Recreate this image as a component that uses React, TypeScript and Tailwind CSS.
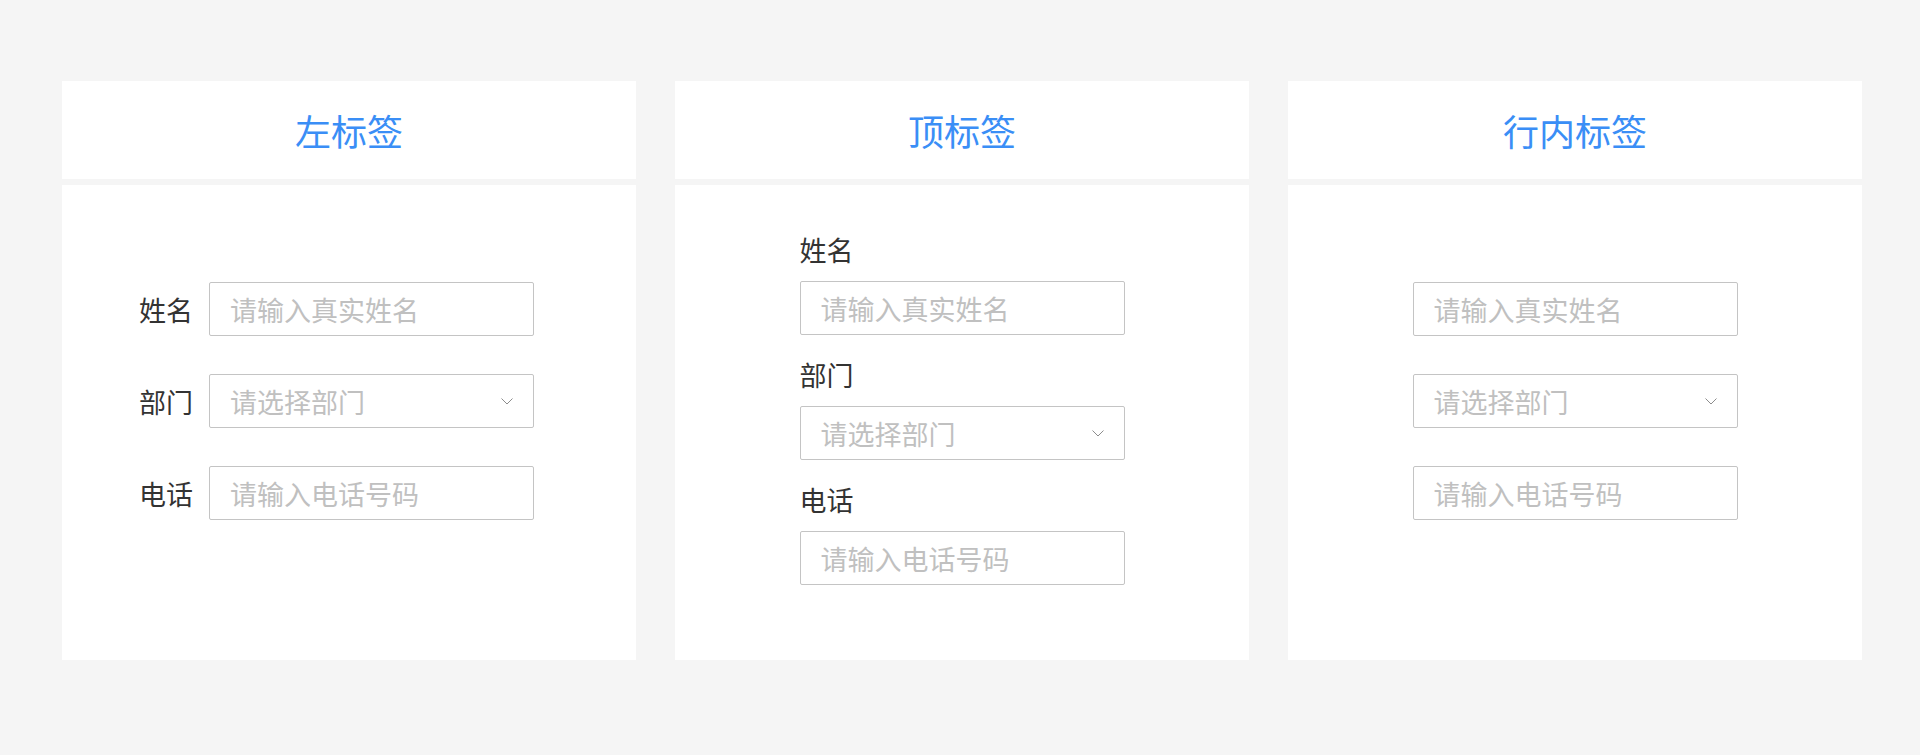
import React from 'react';

const font = { fontFamily: '"Noto Sans CJK SC", "Noto Sans", sans-serif' };

type Field = { label: string; placeholder: string; select?: boolean };

const fields: Field[] = [
  { label: '姓名', placeholder: '请输入真实姓名' },
  { label: '部门', placeholder: '请选择部门', select: true },
  { label: '电话', placeholder: '请输入电话号码' },
];

const Chevron = () => (
  <svg width="12" height="7" viewBox="0 0 12 7" fill="none" className="shrink-0">
    <path d="M0.5 0.5 L6 6 L11.5 0.5" stroke="#8c8c8c" strokeWidth="1" />
  </svg>
);

const Input: React.FC<{ field: Field }> = ({ field }) => (
  <div className="flex items-center justify-between w-[325px] h-[54px] border border-[#c4c4c4] rounded-[2px] bg-white pl-[20px] pr-[20px]">
    <span className="text-[27px] leading-none text-[#c0c0c0]">{field.placeholder}</span>
    {field.select && <Chevron />}
  </div>
);

const Card: React.FC<{ title: string; children: React.ReactNode }> = ({ title, children }) => (
  <div className="flex flex-col w-[574px] gap-[6px]">
    <div className="h-[98px] bg-white flex items-center justify-center">
      <h2 className="text-[36px] leading-none text-[#3a8ef6]">{title}</h2>
    </div>
    <div className="h-[475px] bg-white">{children}</div>
  </div>
);

export default function App() {
  return (
    <div className="min-h-[755px] bg-[#f5f5f5] pt-[81px] pl-[62px]" style={font}>
      <div className="flex gap-[39px]">
        <Card title="左标签">
          <div className="flex flex-col gap-[38px] pt-[97px] pl-[77px]">
            {fields.map((f) => (
              <div key={f.label} className="flex items-center">
                <span className="text-[27px] leading-none text-[#333333] mr-[16px]">{f.label}</span>
                <Input field={f} />
              </div>
            ))}
          </div>
        </Card>
        <Card title="顶标签">
          <div className="flex flex-col items-center gap-[22px] pt-[47px]">
            {fields.map((f) => (
              <div key={f.label} className="flex flex-col gap-[13px]">
                <span className="text-[27px] leading-[36px] text-[#333333]">{f.label}</span>
                <Input field={f} />
              </div>
            ))}
          </div>
        </Card>
        <Card title="行内标签">
          <div className="flex flex-col items-center gap-[38px] pt-[97px]">
            {fields.map((f) => (
              <Input key={f.label} field={f} />
            ))}
          </div>
        </Card>
      </div>
    </div>
  );
}
